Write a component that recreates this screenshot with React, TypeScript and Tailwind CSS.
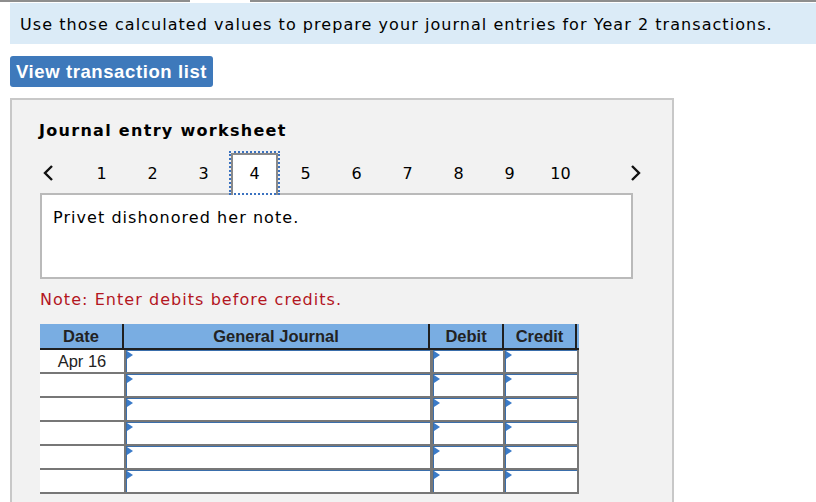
import React from 'react'

const verdana = { fontFamily: '"DejaVu Sans", Verdana, sans-serif' }
const arial = { fontFamily: '"Liberation Sans", Arial, sans-serif' }

function Marker() {
  return (
    <span className="absolute left-0 top-0 w-0 h-0 border-y-[4px] border-y-transparent border-l-[6px] border-l-[#3b7bc8]" />
  )
}

function InputCell() {
  return (
    <div className="relative bg-white border-l border-t border-[#3a6eab] h-[22px]">
      <Marker />
    </div>
  )
}

const pages = ['1', '2', '3', '4', '5', '6', '7', '8', '9', '10']

export default function App() {
  const rows = [0, 1, 2, 3, 4, 5]
  return (
    <div className="w-[816px] h-[502px] overflow-hidden bg-white text-black" style={verdana}>
      {/* top tab strip */}
      <div className="flex h-[2px]">
        <div className="w-[190px] bg-[#8e8e8e]" />
        <div className="w-[60px] bg-white" />
        <div className="flex-1 bg-[#8e8e8e]" />
      </div>

      <div className="ml-[10px] mt-[1px] h-[41px] bg-[#dbebf7] pl-[10px] pt-[2px] flex items-center text-[16px] tracking-[1.05px]">
        Use those calculated values to prepare your journal entries for Year 2 transactions.
      </div>

      <div className="ml-[10px] mt-[12px] w-[203px] h-[31px] rounded-[3px] bg-[#3e79bb] text-white font-bold text-[18.5px] tracking-[0.6px] flex items-center justify-center" style={arial}>
        View transaction list
      </div>

      <div className="ml-[10px] mt-[11px] w-[664px] h-[420px] border-2 border-[#c8c8c8] bg-[#f2f2f2] pl-[28px] pt-[21px]">
        <div className="font-bold text-[16px] tracking-[1.3px] leading-[20px] -ml-[1px]">Journal entry worksheet</div>

        <div className="mt-[10px] flex items-center h-[44px] relative z-10 -mb-[2px]">
          <div className="w-[36px] flex">
            <svg width="12" height="18" viewBox="0 0 12 18" className="ml-[2px]">
              <path d="M10 2 L3 9 L10 16" fill="none" stroke="#111" strokeWidth="2.4" />
            </svg>
          </div>
          {pages.map(p =>
            p === '4' ? (
              <div key={p} className="w-[51px] h-[44px] outline-2 outline-dotted outline-[#3b72c0] -outline-offset-2 flex">
                <div className="mx-[2px] mt-[2px] flex-1 bg-white border-2 border-b-0 border-[#8a8a8a] flex items-center justify-center text-[16px] pb-[3px]">
                  {p}
                </div>
              </div>
            ) : (
              <div key={p} className="w-[51px] text-center text-[16px] pt-[1px]">{p}</div>
            )
          )}
          <div className="ml-[44px] flex">
            <svg width="12" height="18" viewBox="0 0 12 18">
              <path d="M2 2 L9 9 L2 16" fill="none" stroke="#111" strokeWidth="2.4" />
            </svg>
          </div>
        </div>

        <div className="w-[593px] h-[86px] border-2 border-[#bababa] bg-white pl-[11px] pt-[11px] text-[16px] tracking-[1.05px]">
          Privet dishonored her note.
        </div>

        <div className="mt-[10px] text-[16px] tracking-[1.05px] text-[#b3161f] leading-[21px]">Note: Enter debits before credits.</div>

        <div className="mt-[14px] w-[539px]" style={arial}>
          <div className="flex h-[26px] bg-[#79ade2] border-b-2 border-[#1f1f1f] text-[16.5px] font-bold text-[#222]">
            <div className="w-[84px] flex items-center justify-center border-r-2 border-[#1f1f1f]">Date</div>
            <div className="w-[306px] flex items-center justify-center border-r-2 border-[#1f1f1f]">General Journal</div>
            <div className="w-[74px] flex items-center justify-center border-r-2 border-[#1f1f1f]">Debit</div>
            <div className="w-[73px] flex items-center justify-center border-r-2 border-[#1f1f1f]">Credit</div>
          </div>
          <div className="bg-[#777777] grid grid-cols-[84px_304px_71px_72px] gap-x-[2px] gap-y-[2px] pr-[2px] pb-[2px]">
            {rows.map(r => (
              <React.Fragment key={r}>
                <div className="bg-white h-[22px] flex items-center justify-center text-[16.5px] text-[#222]">
                  {r === 0 ? 'Apr 16' : ''}
                </div>
                <InputCell />
                <div className="pl-[1px] bg-[#777777]"><InputCell /></div>
                <InputCell />
              </React.Fragment>
            ))}
          </div>
        </div>
      </div>
    </div>
  )
}
